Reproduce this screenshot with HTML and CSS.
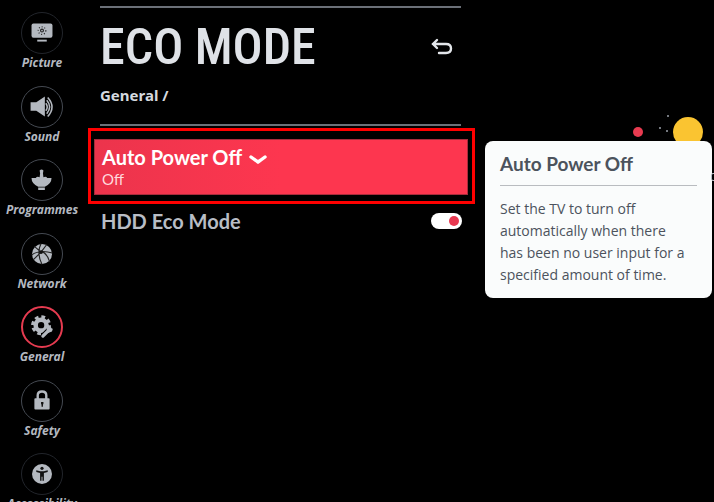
FILE: index.html
```html
<!DOCTYPE html>
<html lang="en">
<head>
<meta charset="utf-8">
<meta name="viewport" content="width=device-width, initial-scale=1">
<title>Eco Mode</title>
<link rel="stylesheet" href="styles.css">
</head>
<body>
<div class="app">
  <nav class="sidebar">
    <a class="nav-item" href="#picture">
      <span class="nav-icon faint"><svg viewBox="0 0 42 42"><rect x="10" y="11" width="22" height="15" rx="2"/><path d="M16 28h10v2H16z"/><circle class="cut-line" cx="21" cy="18.500" r="1.500"/><circle class="cut-line dots" cx="21" cy="18.500" r="4"/></svg></span>
      <span class="nav-label">Picture</span>
    </a>
    <a class="nav-item" href="#sound">
      <span class="nav-icon"><svg viewBox="0 0 42 42"><path d="M9 16h6l9-6v21l-9-6H9z"/><path class="line" d="M25 17q3 4 0 8M26 14q6 7 0 14M27 11q9 10 0 20"/></svg></span>
      <span class="nav-label">Sound</span>
    </a>
    <a class="nav-item" href="#programmes">
      <span class="nav-icon"><svg viewBox="0 0 42 42"><path d="M18.500 11q2-2 4 0l-.5 3 .5 4q3-1 4 1h4.500q0 6-7 9h-7q-7-3-7-9h4.500q1-2 4-1l.5-4zM17 29h7v2.500h-7z"/></svg></span>
      <span class="nav-label">Programmes</span>
    </a>
    <a class="nav-item" href="#network">
      <span class="nav-icon"><svg viewBox="0 0 42 42"><circle cx="21" cy="21" r="10.500"/><path class="cut-line" d="M10 22q9-6 22-2M20 10q-5 10 1 22M20 18q7 3 9 11M13 13l7 6 6-8M12 27l8-8"/><circle class="cut" cx="20" cy="19" r="2"/></svg></span>
      <span class="nav-label">Network</span>
    </a>
    <a class="nav-item" href="#general" aria-current="page">
      <span class="nav-icon"><svg viewBox="0 0 42 42"><circle class="gear" cx="20" cy="19" r="6"/><circle class="teeth" cx="20" cy="19" r="9"/><path class="wrench-edge" d="M22 31l8-8"/><path class="wrench" d="M22 31l8-8"/><path d="M26 23l2-5 1 4 4 1-1 3-5 2z"/></svg></span>
      <span class="nav-label">General</span>
    </a>
    <a class="nav-item" href="#safety">
      <span class="nav-icon"><svg viewBox="0 0 42 42"><rect x="13" y="18" width="16" height="12" rx="1"/><path class="shackle" d="M16.500 19v-4q0-4 4.500-4t4.500 4v4"/><path class="cut" d="M20 22h2.500v2l-.5 1v2h-1.500v-2l-.5-1z"/></svg></span>
      <span class="nav-label">Safety</span>
    </a>
    <a class="nav-item" href="#accessibility">
      <span class="nav-icon faint"><svg viewBox="0 0 42 42"><circle cx="21" cy="21" r="10.500"/><circle class="cut" cx="21" cy="15" r="1.700"/><path class="cut" d="M15 17l4 1h4l4-1v2l-4 1v8h-1.500v-4h-1v4H19v-8l-4-1z"/></svg></span>
      <span class="nav-label">Accessibility</span>
    </a>
  </nav>

  <main class="panel">
    <header class="panel-head">
      <div class="title-row">
        <h1>ECO MODE</h1>
        <button class="back" type="button" aria-label="Back"><svg viewBox="0 0 22 18"><path d="M6 2L2 6l4 4M2 6h13q5 0 5 4.500T15 15H8"/></svg></button>
      </div>
      <p class="crumb">General /</p>
    </header>
    <div class="highlight">
      <button class="option" type="button">
        <span class="option-name">Auto Power Off <svg class="chevron" viewBox="0 0 18 10"><path d="M2 2q4 3 7 5 3-2 7-5"/></svg></span>
        <span class="option-value">Off</span>
      </button>
    </div>
    <div class="toggle-row">
      <label for="hdd">HDD Eco Mode</label>
      <input id="hdd" class="switch" type="checkbox" role="switch" checked>
    </div>
  </main>

  <aside class="side">
    <section class="tip">
      <svg class="orbs" viewBox="0 0 80 32" aria-hidden="true"><circle class="sun" cx="60" cy="18" r="15"/><circle class="planet" cx="10" cy="18" r="5"/><circle class="star" cx="40" cy="2" r="1"/><circle class="star" cx="32" cy="14" r="1"/><circle class="star" cx="39" cy="17" r="1"/></svg>
      <h2>Auto Power Off</h2>
      <p>Set the TV to turn off automatically when there has been no user input for a specified amount of time.</p>
      <span class="edge-mark"></span>
    </section>
  </aside>
</div>
</body>
</html>
```
FILE: styles.css
```css
* { box-sizing: border-box; }

body {
  margin: 0;
  background: #000;
  color: #d5d9df;
  font-family: Lato, "Liberation Sans", sans-serif;
}

h1, h2, p { margin: 0; }

button {
  border: 0;
  padding: 0;
  background: none;
  color: inherit;
  font: inherit;
}

.app {
  display: grid;
  grid-template-columns: 88px 387fr 239fr;
  height: 100vh;
  overflow: hidden;
}

/* Sidebar */
.sidebar {
  display: grid;
  grid-auto-rows: 1fr;
  height: 515px;
  margin-top: 12px;
  padding-right: 4px;
}

.nav-item {
  display: flex;
  flex-direction: column;
  align-items: center;
  color: #b4b9c0;
  text-decoration: none;
}

.nav-icon {
  width: 42px;
  height: 42px;
  border: 1px solid #454a52;
  border-radius: 50%;
}

.nav-icon.faint { border-color: #22252b; }

.nav-item[aria-current] .nav-icon {
  border: 2px solid #e63b50;
}

.nav-icon svg {
  display: block;
  width: 100%;
  height: 100%;
  fill: #b4b9c0;
}

.nav-icon .cut { fill: #111; }
.nav-icon .cut-line { fill: none; stroke: #222; stroke-width: 1.2; }
.nav-icon .dots { stroke-dasharray: 1 2; }
.nav-icon .line { fill: none; stroke: #b4b9c0; stroke-width: 1.6; }
.nav-icon .gear { fill: none; stroke: #b4b9c0; stroke-width: 5; }
.nav-icon .teeth { fill: none; stroke: #b4b9c0; stroke-width: 4; stroke-dasharray: 4 3.07; }
.nav-icon .wrench-edge { stroke: #000; stroke-width: 6; }
.nav-icon .wrench { stroke: #b4b9c0; stroke-width: 3.6; stroke-linecap: round; }
.nav-icon .shackle { fill: none; stroke: #b4b9c0; stroke-width: 2.5; }

.nav-label {
  margin-top: 1px;
  font: italic 700 12px/16px "Open Sans", sans-serif;
}

/* Settings panel */
.panel { padding-top: 6px; }

.panel-head {
  height: 120px;
  margin: 0 14px 0 12px;
  border: solid #6b7078;
  border-width: 2px 0;
}

.title-row {
  display: flex;
  align-items: center;
  justify-content: space-between;
  height: 77px;
  padding-right: 8px;
}

h1 {
  color: #dfe2e7;
  font: 500 50px/64px "Roboto Condensed", "Liberation Sans Narrow", sans-serif;
}

.back svg {
  display: block;
  width: 22px;
  height: 18px;
  fill: none;
  stroke: #e3e6ea;
  stroke-width: 2.4;
  stroke-linecap: round;
}

.crumb {
  font: 700 15px/20px "Noto Sans", sans-serif;
}

.highlight {
  margin-top: 2px;
  padding: 8px 4px 6px 3px;
  border: 3px solid #f00;
}

.option {
  display: flex;
  flex-direction: column;
  width: 100%;
  padding: 5px 7px;
  border: 1px solid #a82c3c;
  background: linear-gradient(90deg, #ec344c, #fd364f 50%);
  color: #fff;
  text-align: left;
}

.option-name {
  font-size: 20px;
  font-weight: 700;
  line-height: 24px;
}

.chevron {
  width: 18px;
  height: 10px;
  margin-left: 2px;
  fill: none;
  stroke: #fff;
  stroke-width: 3.4;
  stroke-linecap: round;
}

.option-value {
  color: #ffd9de;
  font-size: 15px;
  line-height: 20px;
}

.toggle-row {
  display: flex;
  align-items: center;
  justify-content: space-between;
  margin: 4px 13px 0;
  font-size: 20px;
  font-weight: 700;
  line-height: 26px;
  color: #b8bdc5;
}

.switch {
  display: flex;
  align-items: center;
  justify-content: flex-end;
  width: 31px;
  height: 16px;
  margin: 0;
  padding-right: 3px;
  border-radius: 8px;
  background: #fff;
  appearance: none;
}

.switch::before {
  content: "";
  width: 10px;
  height: 10px;
  border-radius: 50%;
  background: #e83850;
}

.switch:not(:checked) { justify-content: flex-start; padding-left: 3px; }

/* Help card */
.side { padding: 141px 2px 0 10px; }

.tip {
  position: relative;
  padding: 10px 15px 12px;
  border-radius: 8px;
  background: #fafcfc;
  color: #4c535d;
}

.tip h2 {
  padding-bottom: 9px;
  border-bottom: 1px solid #b9bcc0;
  font-size: 19px;
  font-weight: 700;
  line-height: 25px;
}

.tip p {
  padding: 12px 8px 0 0;
  font: 14px/22px "Open Sans", sans-serif;
}

.orbs {
  position: absolute;
  right: 4px;
  bottom: 100%;
  width: 80px;
  height: 32px;
  margin-bottom: -5px;
  clip-path: inset(0 0 5px 0);
}

.sun { fill: #fac431; }
.planet { fill: #e83b50; }
.star { fill: #9a9fa8; }

.edge-mark {
  position: absolute;
  top: 32px;
  right: -4px;
  width: 5px;
  height: 8px;
  border: 1px solid #b8bdc5;
  border-radius: 2px;
}
```
